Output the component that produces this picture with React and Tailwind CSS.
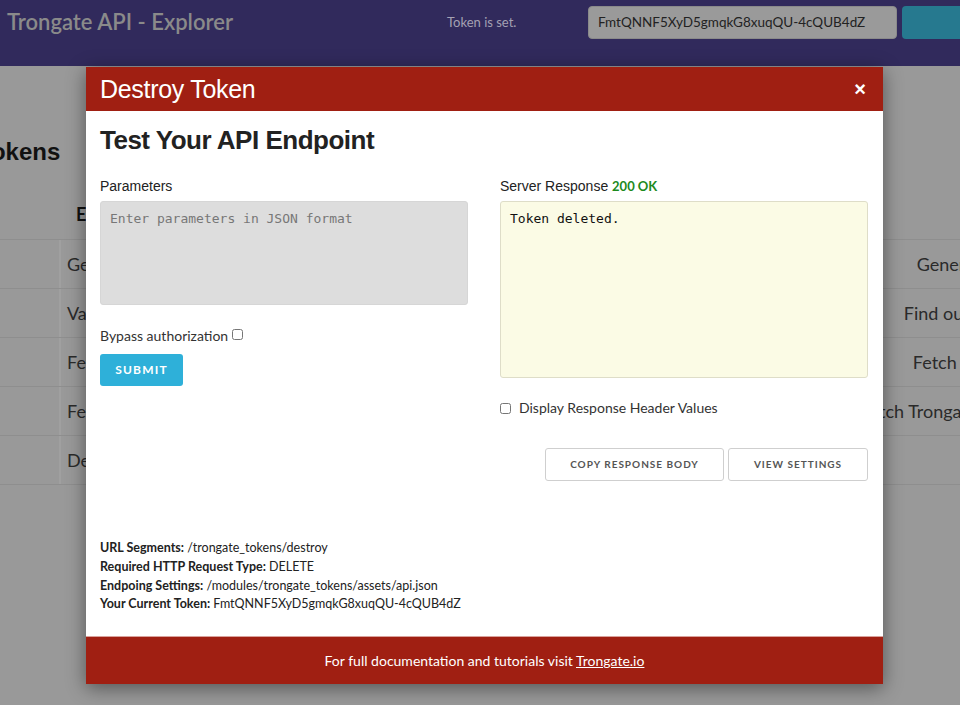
import React from "react";

const rows = [
  ["Generate", "Generate token"],
  ["Validate", "Find out if it's valid"],
  ["Fetch", "Fetch Token Info"],
  ["Fetch", "Fetch Trongate Token Records"],
  ["Destroy", ""],
];

function Background() {
  return (
    <div className="w-[960px] h-[705px] overflow-hidden bg-[#999999] font-['Lato',sans-serif]">
      <div className="h-[66px] bg-[#312a5c] flex items-start">
        <div className="shrink-0 pl-[7px] pt-[7px] text-[22px] font-semibold text-[#8a8a8a] leading-[30px] w-[447px] whitespace-nowrap">
          Trongate API - Explorer
        </div>
        <div className="shrink-0 pt-[13px] text-[13px] text-[#a4a1b3] leading-[18px] w-[141px]">Token is set.</div>
        <div className="shrink-0 mt-[6px] w-[309px] h-[33px] rounded-[4px] bg-[#9a9a9a] border border-[#8a8a8a] px-[9px] flex items-center text-[13.5px] text-[#222]">
          FmtQNNF5XyD5gmqkG8xuqQU-4cQUB4dZ
        </div>
        <div className="shrink-0 mt-[6px] ml-[5px] w-[80px] h-[33px] rounded-[4px] bg-[#26798f]" />
      </div>
      <div className="ml-[-22px] mt-[72px] text-[24px] font-bold leading-[28px] text-[#111] font-['Liberation_Sans',sans-serif]">
        Tokens
      </div>
      <div className="mt-[24px]">
        <div className="flex h-[49px] items-center">
          <div className="w-[61px] shrink-0" />
          <div className="pl-[15px] text-[18px] font-bold text-[#111]">Endpoint</div>
        </div>
        {rows.map((r, i) => (
          <div key={i} className="flex h-[49px] border-t border-[#8e8e8e] items-center">
            <div className="shrink-0 w-[61px] h-full border-r-[2px] border-[#a0a0a0]" />
            <div className="shrink-0 pl-[6px] w-[740px] text-[18px] text-[#2a2a2a]">{r[0]}</div>
            <div className="shrink-0 w-[354px] text-center text-[18px] text-[#2a2a2a] whitespace-nowrap">{r[1]}</div>
          </div>
        ))}
        <div className="border-t border-[#8e8e8e]" />
      </div>
    </div>
  );
}

function Modal() {
  return (
    <div className="absolute left-[86px] top-[67px] w-[797px] bg-white shadow-[0_4px_18px_rgba(0,0,0,0.45)] font-['Lato',sans-serif]">
      <div className="h-[44px] bg-[#a01f12] flex items-center justify-between pl-[14px] pr-[17px]">
        <div className="text-white text-[25px] leading-[30px] tracking-[-0.3px] font-['Liberation_Sans',sans-serif]">Destroy Token</div>
        <div className="text-white text-[20px] font-bold leading-none font-['Liberation_Sans',sans-serif]">×</div>
      </div>
      <div className="h-[525px] flex flex-col px-[14px] pt-[14px] pb-[22px]">
        <div className="text-[26px] leading-[30px] font-bold tracking-[-0.5px] text-[#222] font-['Liberation_Sans',sans-serif]">
          Test Your API Endpoint
        </div>
        <div className="flex gap-[32px] mt-[22px]">
          <div className="w-[368px] flex flex-col">
            <div className="text-[14px] leading-[18px] text-[#222] font-['Liberation_Sans',sans-serif]">Parameters</div>
            <div className="mt-[6px] h-[104px] rounded-[3px] bg-[#dddddd] border border-[#d6d6d6] px-[9px] pt-[7px] font-['DejaVu_Sans_Mono',monospace] text-[13px] leading-[20px] text-[#777]">
              Enter parameters in JSON format
            </div>
            <div className="mt-[22px] flex items-center text-[14px] leading-[18px] text-[#333]">
              Bypass authorization
              <input type="checkbox" className="ml-[4px] w-[11px] h-[11px] mb-[4px]" />
            </div>
            <div className="mt-[9px] w-[83px] h-[32px] rounded-[3px] bg-[#2eb0d9] flex items-center justify-center text-white text-[12px] font-bold tracking-[1.2px]">
              SUBMIT
            </div>
          </div>
          <div className="w-[368px] flex flex-col">
            <div className="text-[14px] leading-[18px] text-[#222] font-['Liberation_Sans',sans-serif]">
              Server Response <span className="text-[#1d8a1d] font-bold font-['Lato',sans-serif] text-[13px]">200 OK</span>
            </div>
            <div className="mt-[6px] h-[177px] rounded-[3px] bg-[#fbfbe5] border border-[#deddc8] px-[9px] pt-[7px] font-['DejaVu_Sans_Mono',monospace] text-[13px] leading-[20px] text-[#111]">
              Token deleted.
            </div>
            <div className="mt-[21px] flex items-center text-[14px] leading-[18px] text-[#333]">
              <input type="checkbox" className="w-[11px] h-[11px] mr-[8px] ml-0" />
              Display Response Header Values
            </div>
            <div className="mt-[31px] flex justify-end gap-[4px]">
              <div className="w-[179px] h-[33px] rounded-[3px] border border-[#cfcfcf] flex items-center justify-center text-[10px] font-bold tracking-[1px] text-[#555]">
                COPY RESPONSE BODY
              </div>
              <div className="w-[140px] h-[33px] rounded-[3px] border border-[#cfcfcf] flex items-center justify-center text-[10px] font-bold tracking-[1px] text-[#555]">
                VIEW SETTINGS
              </div>
            </div>
          </div>
        </div>
        <div className="mt-auto text-[12.5px] leading-[18.7px] text-[#222]">
          <div><span className="font-bold">URL Segments:</span> /trongate_tokens/destroy</div>
          <div><span className="font-bold">Required HTTP Request Type:</span> DELETE</div>
          <div><span className="font-bold">Endpoing Settings:</span> /modules/trongate_tokens/assets/api.json</div>
          <div><span className="font-bold">Your Current Token:</span> FmtQNNF5XyD5gmqkG8xuqQU-4cQUB4dZ</div>
        </div>
      </div>
      <div className="h-[48px] bg-[#a01f12] border-t border-[#d9a29c] flex items-center justify-center text-white text-[14px]">
        <span>For full documentation and tutorials visit&nbsp;<span className="underline">Trongate.io</span></span>
      </div>
    </div>
  );
}

export default function App() {
  return (
    <div className="relative w-[960px] h-[705px] overflow-hidden">
      <Background />
      <Modal />
    </div>
  );
}
